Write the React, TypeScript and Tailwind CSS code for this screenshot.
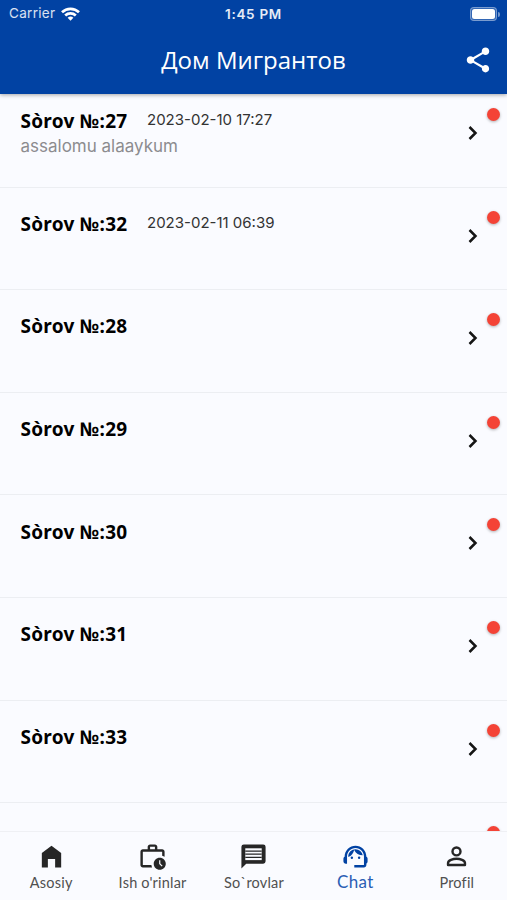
import { ReactNode } from 'react';
import { MdHomeFilled, MdOutlineWorkHistory, MdShare, MdSupportAgent } from 'react-icons/md';

interface Request {
    id?: number;
    date?: string;
    message?: string;
}

const requests: Request[] = [
    { id: 27, date: '2023-02-10 17:27', message: 'assalomu alaaykum' },
    { id: 32, date: '2023-02-11 06:39' },
    { id: 28 },
    { id: 29 },
    { id: 30 },
    { id: 31 },
    { id: 33 },
    {},
];

function MessageIcon({ className }: { className?: string }) {
    return (
        <svg className={className} viewBox="0 0 24 24" fill="none" stroke="currentColor">
            <path d="M2 22V4a2 2 0 0 1 2-2h16a2 2 0 0 1 2 2v12a2 2 0 0 1-2 2H6z" fill="currentColor" stroke="none" />
            <path d="M5.2 5.2h13.6v9.8H5.2z" fill="#fafbff" stroke="none" />
            <path d="M5.2 7.5h13.6M5.2 10.1h13.6M5.2 12.7h13.6" strokeWidth="1.1" />
        </svg>
    );
}

function ProfileIcon({ className }: { className?: string }) {
    return (
        <svg className={className} viewBox="0 0 24 24" fill="none" stroke="currentColor" strokeWidth="2">
            <circle cx="12" cy="7.8" r="3.3" />
            <path d="M5 19v-1.6c0-2.2 4.2-3.5 7-3.5s7 1.3 7 3.5V19z" strokeLinejoin="round" />
        </svg>
    );
}

const tabs = [
    { label: 'Asosiy', icon: MdHomeFilled },
    { label: "Ish o'rinlar", icon: MdOutlineWorkHistory },
    { label: 'So`rovlar', icon: MessageIcon },
    { label: 'Chat', icon: MdSupportAgent, active: true },
    { label: 'Profil', icon: ProfileIcon },
];

function StatusBar() {
    return (
        <div className="grid h-7 grid-cols-3 items-center pl-[9px] pr-1.5 text-[13.5px] leading-none text-white">
            <div className="flex items-center gap-1.5">
                <span className="tracking-[0.3px] text-white/85">Carrier</span>
                <svg className="h-[14px] w-[19px]" viewBox="0 0 19 14" fill="none" stroke="currentColor" strokeWidth="2.7">
                    <path d="M1 5.2a12.3 12.3 0 0 1 17 0" />
                    <path d="M4.2 8.5a7.7 7.7 0 0 1 10.6 0" />
                    <path d="M9.5 13.8 6.6 10.8a4.2 4.2 0 0 1 5.8 0z" fill="currentColor" stroke="none" />
                </svg>
            </div>
            <span className="pr-[3px] pt-px text-center font-semibold tracking-[0.7px] text-white/90">1:45 PM</span>
            <div className="flex items-center justify-end gap-px pr-px">
                <div className="h-[14px] w-[27px] rounded-[4px] border border-white/35 bg-white/20 p-px">
                    <div className="h-full w-full rounded-[2.5px] bg-white" />
                </div>
                <div className="h-[5px] w-[2px] rounded-r-full bg-white/45" />
            </div>
        </div>
    );
}

function Header({ children }: { children: ReactNode }) {
    return (
        <header className="relative z-10 h-[94px] shrink-0 bg-[#0142a3] shadow-[0_1px_4px_rgba(0,0,0,0.35)]">
            <StatusBar />
            <div className="grid h-16 grid-cols-[48px_1fr_48px] items-center pr-[5px] text-white">
                <span />
                <h1 className="pl-[5px] text-center font-['Open_Sans'] text-[24px] font-medium leading-none">
                    {children}
                </h1>
                <button className="flex justify-center">
                    <MdShare className="size-[30px]" />
                </button>
            </div>
        </header>
    );
}

function RequestRow({ request }: { request: Request }) {
    return (
        <li className="flex h-[102.6px] shrink-0 justify-between border-b border-[#eceef2] pl-[20.5px] pr-[7px]">
            <div className="pt-[24.3px]">
                {request.id && (
                    <div className="flex gap-5">
                        <h2 className="w-[106.5px] whitespace-nowrap font-['Noto_Sans'] text-[19px] font-bold leading-[25px] tracking-[0.25px] text-black">
                            Sòrov №:{request.id}
                        </h2>
                        {request.date && <span className="text-[15px] leading-[22px] text-[#333]">{request.date}</span>}
                    </div>
                )}
                {request.message && <p className="text-[17px] leading-[25px] text-[#8c8c8f]">{request.message}</p>}
            </div>
            <div className="flex gap-2">
                <svg className="mt-10 h-4 w-3" viewBox="0 0 12 16" fill="none" stroke="#151515" strokeWidth="2.5">
                    <path d="M2.5 2 8.5 8l-6 6" />
                </svg>
                <span className="mt-[23px] size-[13px] rounded-full bg-[#f44336] shadow-[0_1px_3px_rgba(0,0,0,0.3)]" />
            </div>
        </li>
    );
}

function TabBar() {
    return (
        <nav className="relative z-10 grid h-[69px] shrink-0 grid-cols-5 border-t border-[#eff0f4] bg-[#fafbff] font-[Lato]">
            {tabs.map(({ label, icon: Icon, active }) => (
                <button
                    key={label}
                    className={`flex flex-col items-center pl-px pt-[9.5px] ${active ? 'text-[#0142a3]' : 'text-[#262626]'}`}
                >
                    <Icon className="size-[29px]" />
                    <span
                        className={`whitespace-nowrap ${active ? 'text-[17px] leading-[21px] tracking-[0.4px] text-[#2a5eb4]' : 'text-[14.5px] leading-6 tracking-[0.2px] text-[#505050]'}`}
                    >
                        {label}
                    </span>
                </button>
            ))}
        </nav>
    );
}

export default function App() {
    return (
        <div className="flex h-[900px] w-[507px] flex-col overflow-hidden bg-[#fafbff] font-[Inter]">
            <Header>Дом Мигрантов</Header>
            <main className="min-h-0 flex-1 overflow-hidden">
                {/* list is scrolled slightly under the header */}
                <ul className="-mt-[9px] flex flex-col">
                    {requests.map((request, index) => (
                        <RequestRow key={index} request={request} />
                    ))}
                </ul>
            </main>
            <TabBar />
        </div>
    );
}
